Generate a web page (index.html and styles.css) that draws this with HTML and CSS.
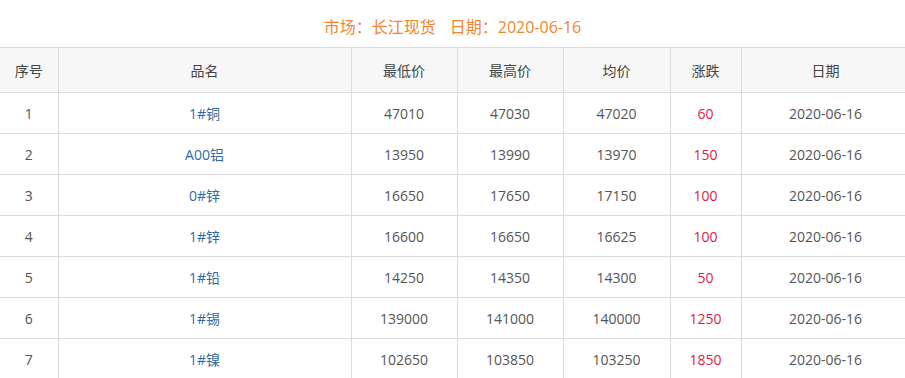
FILE: index.html
```html
<!DOCTYPE html>
<html lang="zh-CN">
<head>
<meta charset="utf-8">
<link rel="stylesheet" href="styles.css">
</head>
<body>
<div class="title">市场：长江现货<span class="gap"></span>日期：2020-06-16</div>
<table class="price">
<colgroup>
<col class="c1"><col class="c2"><col class="c3"><col class="c4"><col class="c5"><col class="c6"><col class="c7">
</colgroup>
<thead>
<tr><th>序号</th><th>品名</th><th>最低价</th><th>最高价</th><th>均价</th><th>涨跌</th><th>日期</th></tr>
</thead>
<tbody>
<tr><td>1</td><td><a class="name">1#铜</a></td><td>47010</td><td>47030</td><td>47020</td><td class="up">60</td><td>2020-06-16</td></tr>
<tr><td>2</td><td><a class="name">A00铝</a></td><td>13950</td><td>13990</td><td>13970</td><td class="up">150</td><td>2020-06-16</td></tr>
<tr><td>3</td><td><a class="name">0#锌</a></td><td>16650</td><td>17650</td><td>17150</td><td class="up">100</td><td>2020-06-16</td></tr>
<tr><td>4</td><td><a class="name">1#锌</a></td><td>16600</td><td>16650</td><td>16625</td><td class="up">100</td><td>2020-06-16</td></tr>
<tr><td>5</td><td><a class="name">1#铅</a></td><td>14250</td><td>14350</td><td>14300</td><td class="up">50</td><td>2020-06-16</td></tr>
<tr><td>6</td><td><a class="name">1#锡</a></td><td>139000</td><td>141000</td><td>140000</td><td class="up">1250</td><td>2020-06-16</td></tr>
<tr><td>7</td><td><a class="name">1#镍</a></td><td>102650</td><td>103850</td><td>103250</td><td class="up">1850</td><td>2020-06-16</td></tr>
</tbody>
</table>
</body>
</html>
```
FILE: styles.css
```css
html, body {
  margin: 0;
  padding: 0;
  background: #fff;
}
body {
  font-family: "Open Sans", "Noto Sans CJK SC", sans-serif;
  color: #555;
  overflow: hidden;
}
.title {
  height: 47px;
  padding-top: 14px;
  box-sizing: border-box;
  text-align: center;
  font-size: 16px;
  line-height: 26px;
  color: #f0862f;
  width: 905px;
}
.gap {
  display: inline-block;
  width: 14px;
}
.price {
  border-collapse: collapse;
  table-layout: fixed;
  width: 910px;
  font-size: 14px;
}
.c1 { width: 58px; }
.c2 { width: 293px; }
.c3 { width: 106px; }
.c4 { width: 106px; }
.c5 { width: 107px; }
.c6 { width: 71px; }
.c7 { width: 169px; }
.price th, .price td {
  border: 1px solid #dcdcdc;
  text-align: center;
  padding: 0;
  font-weight: normal;
}
.price th:first-child, .price td:first-child {
  border-left: none;
}
.price th {
  height: 44px;
  background: #f7f7f7;
  color: #444;
}
.price td {
  height: 40px;
}
.name {
  color: #2f6aa3;
  text-decoration: none;
}
.up {
  color: #e2194a;
}
```
